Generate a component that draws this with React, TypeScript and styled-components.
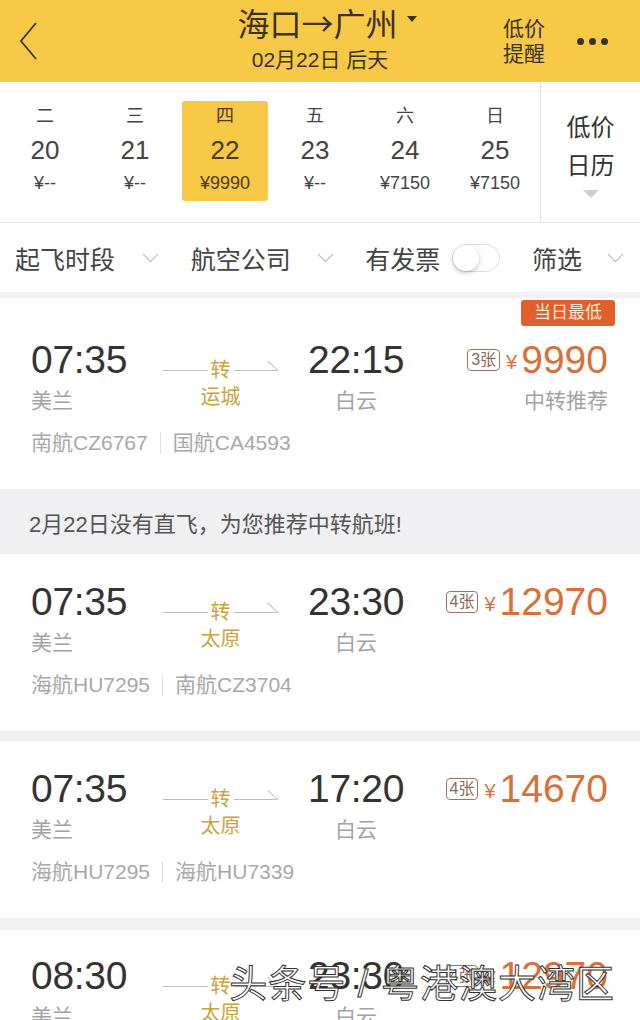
import styled, { createGlobalStyle } from "styled-components";

const GlobalStyle = createGlobalStyle`
  html, body {
    margin: 0;
    padding: 0;
  }
  body {
    background: #f1f1f3;
    font-family: "Liberation Sans", "Noto Sans CJK SC", sans-serif;
  }
  * {
    box-sizing: border-box;
  }
`;

const Page = styled.div`
  position: relative;
  width: 640px;
  height: 1020px;
  overflow: hidden;
  background: #f1f1f3;
`;

/* header */
const Header = styled.header`
  height: 82px;
  background: #f7c946;
  display: grid;
  grid-template-columns: 160px 1fr 160px;
  color: #3a3222;
`;

const BackButton = styled.div`
  display: flex;
  align-items: center;
  padding-left: 19px;
`;

const TitleBlock = styled.div`
  display: flex;
  flex-direction: column;
  align-items: center;
  padding-top: 2px;
`;

const Title = styled.div`
  display: flex;
  align-items: center;
  gap: 9px;
  font-family: "Noto Sans CJK SC", sans-serif;
  font-size: 32px;
  line-height: 40px;
  padding-left: 14px;
`;

const Caret = styled.span`
  width: 0;
  height: 0;
  border-left: 5px solid transparent;
  border-right: 5px solid transparent;
  border-top: 6px solid #3a3222;
  margin-top: -6px;
`;

const Subtitle = styled.div`
  font-size: 21px;
  line-height: 24px;
  margin-top: 6px;
`;

const HeaderRight = styled.div`
  display: flex;
  align-items: center;
  justify-content: flex-end;
  gap: 32px;
  padding-right: 32px;
`;

const Remind = styled.div`
  font-size: 21px;
  line-height: 25px;
  text-align: center;
`;

const Dots = styled.div`
  display: flex;
  gap: 5px;
`;

const Dot = styled.span`
  width: 7px;
  height: 7px;
  border-radius: 50%;
  background: #3a3222;
`;

/* date strip */
const DateRow = styled.div`
  display: flex;
  height: 140px;
  background: #fff;
`;

const Days = styled.div`
  display: grid;
  grid-template-columns: repeat(6, 90px);
  padding-top: 19px;
`;

const DayCell = styled.div<{ $active?: boolean }>`
  height: 100px;
  margin: 0 2px;
  border-radius: 3px;
  display: flex;
  flex-direction: column;
  align-items: center;
  padding-top: 3px;
  background: ${({ $active }) => ($active ? "#f6c845" : "transparent")};
  color: ${({ $active }) => ($active ? "#4a3c18" : "#444")};
`;

const Weekday = styled.div`
  font-size: 18px;
  line-height: 24px;
`;

const DayNum = styled.div`
  font-size: 26px;
  line-height: 32px;
  margin-top: 6px;
  color: inherit;
`;

const DayPrice = styled.div`
  font-size: 18px;
  line-height: 22px;
  margin-top: 6px;
`;

const CalendarCol = styled.div`
  flex: 1;
  border-left: 1px solid #e2e2e2;
  display: flex;
  flex-direction: column;
  align-items: center;
  padding-top: 27px;
  color: #333;
`;

const CalendarText = styled.div`
  font-size: 24px;
  line-height: 38px;
  text-align: center;
`;

const GrayTriangle = styled.span`
  width: 0;
  height: 0;
  border-left: 8px solid transparent;
  border-right: 8px solid transparent;
  border-top: 8px solid #cfcfcf;
  margin-top: 5px;
`;

/* filter bar */
const FilterBar = styled.div`
  height: 70px;
  background: #fff;
  border-top: 1px solid #e6e6e6;
  display: flex;
  align-items: center;
  justify-content: space-between;
  padding: 0 16px 0 15px;
  color: #444;
`;

const FilterItem = styled.div<{ $gap: number }>`
  display: flex;
  align-items: center;
  gap: ${({ $gap }) => $gap}px;
  font-size: 25px;
`;

const Toggle = styled.span`
  position: relative;
  width: 48px;
  height: 28px;
  border-radius: 14px;
  border: 1px solid #dcdcdc;
  background: #fff;
  &::after {
    content: "";
    position: absolute;
    left: 0;
    top: 0;
    width: 26px;
    height: 26px;
    border-radius: 50%;
    background: #fff;
    box-shadow: 0 2px 4px rgba(0, 0, 0, 0.25);
  }
`;

/* flight list */
const List = styled.div`
  display: flex;
  flex-direction: column;
  margin-top: 6px;
`;

const Card = styled.div<{ $top: number; $gapAbove: number }>`
  position: relative;
  background: #fff;
  padding: ${({ $top }) => $top}px 32px 33px 31px;
  margin-top: ${({ $gapAbove }) => $gapAbove}px;
`;

const Badge = styled.span`
  position: absolute;
  top: 2px;
  right: 25px;
  height: 26px;
  padding: 0 13px;
  border-radius: 3px;
  background: #e0602b;
  color: #fde6d5;
  font-size: 17px;
  line-height: 26px;
`;

const MainRow = styled.div`
  display: grid;
  grid-template-columns: 132px 115px auto 1fr;
  align-items: start;
`;

const TimeCol = styled.div<{ $center?: boolean }>`
  display: flex;
  flex-direction: column;
  align-items: ${({ $center }) => ($center ? "center" : "flex-start")};
  margin-left: ${({ $center }) => ($center ? "30px" : "0")};
`;

const Time = styled.div`
  font-size: 39px;
  line-height: 44px;
  color: #333;
  letter-spacing: -0.3px;
`;

const Place = styled.div`
  font-size: 21px;
  line-height: 26px;
  margin-top: 6px;
  color: #a3a3a3;
`;

const TransferCol = styled.div`
  display: flex;
  flex-direction: column;
  align-items: center;
  padding-top: 20px;
`;

const Route = styled.div`
  display: flex;
  align-items: center;
  width: 100%;
  height: 24px;
`;

const Segment = styled.span`
  position: relative;
  flex: 1;
  height: 1px;
  background: #bdbdbd;
`;

const ArrowSegment = styled(Segment)`
  &::after {
    content: "";
    position: absolute;
    right: 0;
    bottom: 0;
    width: 14px;
    height: 1px;
    background: #bdbdbd;
    transform-origin: right center;
    transform: rotate(42deg);
  }
`;

const Via = styled.span`
  font-size: 20px;
  line-height: 24px;
  padding: 0 3px;
  color: #c9a43c;
`;

const ViaCity = styled.div`
  font-size: 20px;
  line-height: 26px;
  margin-top: 2px;
  color: #c9a43c;
`;

const PriceCol = styled.div`
  justify-self: end;
  display: flex;
  flex-direction: column;
  align-items: flex-end;
`;

const PriceRow = styled.div`
  display: flex;
  align-items: center;
  height: 44px;
`;

const Tickets = styled.span`
  border: 1px solid #9a7561;
  border-radius: 4px;
  padding: 0 3px;
  font-size: 16px;
  line-height: 20px;
  color: #8e6a56;
  margin-right: 6px;
`;

const Yen = styled.span`
  font-size: 20px;
  color: #d8733d;
  margin-right: 4px;
  padding-top: 4px;
`;

const Price = styled.span`
  font-size: 39px;
  line-height: 44px;
  color: #d96f39;
`;

const Note = styled.div`
  font-size: 21px;
  line-height: 26px;
  margin-top: 6px;
  color: #a3a3a3;
`;

const Flights = styled.div`
  display: flex;
  align-items: center;
  margin-top: 16px;
  font-size: 21px;
  line-height: 26px;
  color: #a8a8a8;
`;

const Divider = styled.span`
  width: 1px;
  height: 22px;
  background: #e2e2e2;
  margin: 0 12px;
`;

const Banner = styled.div`
  height: 65px;
  display: flex;
  align-items: center;
  padding-left: 29px;
  font-size: 22px;
  color: #555;
  background: #f0f0f2;
`;

const Watermark = styled.div`
  position: absolute;
  right: 25px;
  bottom: 14px;
  font-size: 38px;
  line-height: 44px;
  color: rgba(255, 255, 255, 0.95);
  -webkit-text-stroke: 1px #333;
  letter-spacing: 1px;
`;

const Chevron = () => (
  <svg width="17" height="10" viewBox="0 0 17 10">
    <polyline points="1,1 8.5,8.5 16,1" fill="none" stroke="#c4c4c4" strokeWidth="1.3" />
  </svg>
);

const days = [
  { w: "二", d: "20", p: "¥--" },
  { w: "三", d: "21", p: "¥--" },
  { w: "四", d: "22", p: "¥9990", active: true },
  { w: "五", d: "23", p: "¥--" },
  { w: "六", d: "24", p: "¥7150" },
  { w: "日", d: "25", p: "¥7150" },
];

type Flight = {
  dep: string;
  arr: string;
  via: string;
  tickets: string;
  price: string;
  note?: string;
  codes: [string, string];
};

const flights: Flight[] = [
  { dep: "07:35", arr: "23:30", via: "太原", tickets: "4张", price: "12970", codes: ["海航HU7295", "南航CZ3704"] },
  { dep: "07:35", arr: "17:20", via: "太原", tickets: "4张", price: "14670", codes: ["海航HU7295", "海航HU7339"] },
  { dep: "08:30", arr: "23:30", via: "太原", tickets: "4张", price: "12970", codes: ["海航HU7295", "南航CZ3704"] },
];

const FlightCard = ({ f, top, gapAbove, badge }: { f: Flight; top: number; gapAbove: number; badge?: boolean }) => (
  <Card $top={top} $gapAbove={gapAbove}>
    {badge && <Badge>当日最低</Badge>}
    <MainRow>
      <TimeCol>
        <Time>{f.dep}</Time>
        <Place>美兰</Place>
      </TimeCol>
      <TransferCol>
        <Route>
          <Segment />
          <Via>转</Via>
          <ArrowSegment />
        </Route>
        <ViaCity>{f.via}</ViaCity>
      </TransferCol>
      <TimeCol $center>
        <Time>{f.arr}</Time>
        <Place>白云</Place>
      </TimeCol>
      <PriceCol>
        <PriceRow>
          <Tickets>{f.tickets}</Tickets>
          <Yen>¥</Yen>
          <Price>{f.price}</Price>
        </PriceRow>
        {f.note && <Note>{f.note}</Note>}
      </PriceCol>
    </MainRow>
    <Flights>
      {f.codes[0]}
      <Divider />
      {f.codes[1]}
    </Flights>
  </Card>
);

export default function App() {
  const first: Flight = {
    dep: "07:35",
    arr: "22:15",
    via: "运城",
    tickets: "3张",
    price: "9990",
    note: "中转推荐",
    codes: ["南航CZ6767", "国航CA4593"],
  };

  return (
    <Page>
      <GlobalStyle />
      <Header>
        <BackButton>
          <svg width="20" height="40" viewBox="0 0 20 40">
            <polyline points="17,2 2,20 17,38" fill="none" stroke="#3a3222" strokeWidth="1.8" />
          </svg>
        </BackButton>
        <TitleBlock>
          <Title>
            海口→广州
            <Caret />
          </Title>
          <Subtitle>02月22日 后天</Subtitle>
        </TitleBlock>
        <HeaderRight>
          <Remind>
            低价
            <br />
            提醒
          </Remind>
          <Dots>
            <Dot />
            <Dot />
            <Dot />
          </Dots>
        </HeaderRight>
      </Header>

      <DateRow>
        <Days>
          {days.map((d) => (
            <DayCell key={d.d} $active={d.active}>
              <Weekday>{d.w}</Weekday>
              <DayNum>{d.d}</DayNum>
              <DayPrice>{d.p}</DayPrice>
            </DayCell>
          ))}
        </Days>
        <CalendarCol>
          <CalendarText>
            低价
            <br />
            日历
          </CalendarText>
          <GrayTriangle />
        </CalendarCol>
      </DateRow>

      <FilterBar>
        <FilterItem $gap={27}>
          起飞时段
          <Chevron />
        </FilterItem>
        <FilterItem $gap={26}>
          航空公司
          <Chevron />
        </FilterItem>
        <FilterItem $gap={12}>
          有发票
          <Toggle />
        </FilterItem>
        <FilterItem $gap={25}>
          筛选
          <Chevron />
        </FilterItem>
      </FilterBar>

      <List>
        <FlightCard f={first} top={40} gapAbove={0} badge />
        <Banner>2月22日没有直飞，为您推荐中转航班!</Banner>
        <FlightCard f={flights[0]} top={26} gapAbove={0} />
        <FlightCard f={flights[1]} top={26} gapAbove={10} />
        <FlightCard f={flights[2]} top={24} gapAbove={12} />
      </List>

      <Watermark>头条号 / 粤港澳大湾区</Watermark>
    </Page>
  );
}
